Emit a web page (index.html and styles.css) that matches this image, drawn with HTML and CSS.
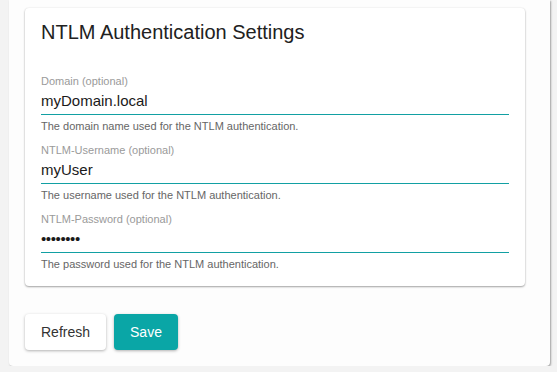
FILE: index.html
```html
<!DOCTYPE html>
<html lang="en">
<head>
  <meta charset="UTF-8">
  <meta name="viewport" content="width=device-width, initial-scale=1.0">
  <title>NTLM Authentication Settings</title>
  <link rel="stylesheet" href="styles.css">
</head>
<body>
  <!-- Settings Page -->
  <div class="page">
    <div class="card">
      <h2 class="card-title">NTLM Authentication Settings</h2>

      <div class="field">
        <label class="field-label" for="domain">Domain (optional)</label>
        <input class="field-input" id="domain" type="text" value="myDomain.local">
        <p class="field-help">The domain name used for the NTLM authentication.</p>
      </div>

      <div class="field">
        <label class="field-label" for="username">NTLM-Username (optional)</label>
        <input class="field-input" id="username" type="text" value="myUser">
        <p class="field-help">The username used for the NTLM authentication.</p>
      </div>

      <div class="field">
        <label class="field-label" for="password">NTLM-Password (optional)</label>
        <input class="field-input field-password" id="password" type="password" value="password">
        <p class="field-help">The password used for the NTLM authentication.</p>
      </div>
    </div>

    <!-- Actions -->
    <div class="actions">
      <button class="btn">Refresh</button>
      <button class="btn btn-primary">Save</button>
    </div>
  </div>
</body>
</html>
```

FILE: styles.css
```css
body {
  margin: 0;
  background-color: #f3f3f3;
  font-family: 'Liberation Sans', Arial, sans-serif;
  color: #212121;
}

/* Outer Panel */
.page {
  margin-left: 9px;
  width: 541px;
  box-sizing: border-box;
  padding: 8px 25px 16px 16px;
  background-color: #fdfdfd;
  border-radius: 0 0 4px 4px;
  box-shadow: 1px 1px 2px rgba(0, 0, 0, 0.35);
}

/* Settings Card */
.card {
  background-color: white;
  border-radius: 4px;
  padding: 12px 16px 15px;
  box-shadow: 0 1px 2px rgba(0, 0, 0, 0.35), 0 0 2px rgba(0, 0, 0, 0.08);
}

.card-title {
  margin: 0 0 31px;
  font-size: 20px;
  font-weight: normal;
  line-height: 24px;
  color: #212121;
}

/* Form Fields */
.field {
  margin-bottom: 11px;
}

.field:last-child {
  margin-bottom: 0;
}

.field-label {
  display: block;
  font-size: 11px;
  line-height: 13px;
  color: #9a9a9a;
}

.field-input {
  display: block;
  width: 100%;
  box-sizing: content-box;
  margin: 2px 0 0;
  padding: 0 0 4px;
  height: 20px;
  border: none;
  border-bottom: 1px solid #12a0a3;
  outline: none;
  background: transparent;
  font-family: inherit;
  font-size: 15px;
  color: #1a1a1a;
}

.field-password {
  letter-spacing: -0.4px;
}

.field-help {
  margin: 5px 0 0;
  font-size: 11px;
  line-height: 13px;
  color: #666;
}

/* Buttons */
.actions {
  display: flex;
  gap: 8px;
  margin-top: 28px;
}

.btn {
  height: 36px;
  padding: 0 16px;
  border: none;
  border-radius: 4px;
  background-color: white;
  color: #333;
  font-family: inherit;
  font-size: 14px;
  cursor: pointer;
  box-shadow: 0 1px 3px rgba(0, 0, 0, 0.3);
}

.btn-primary {
  background-color: #0aa6a6;
  color: white;
}

.btn-primary:hover {
  background-color: #089393;
}
```
